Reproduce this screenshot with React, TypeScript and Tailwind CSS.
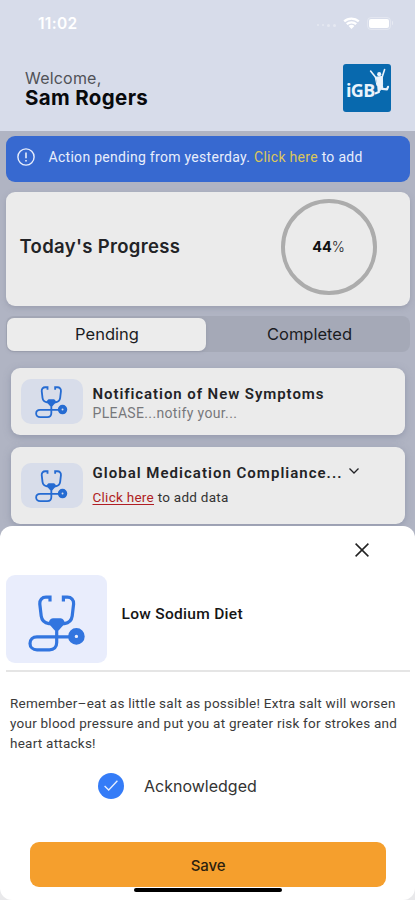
import React from "react";

function Stethoscope({ className }: { className: string }) {
  return (
    <svg viewBox="0 0 58 58" className={className} fill="none" stroke="currentColor" strokeWidth="3.2">
      <path d="M22 6.500V2.200H18C14 2.200 11.500 5 11.800 9L13.200 21C13.800 25.500 16.500 28 21 28.600H24" />
      <path d="M35.400 6.500V2.200H39.400C43.400 2.200 45.900 5 45.600 9L44.200 21C43.600 25.500 40.900 28 36.400 28.600H33.400" />
      <path d="M21 26.500C22 24 23.500 23.200 25 23.200H32.400C34 23.200 35.400 24 36.400 26.500V29L30.600 35.500H26.800L21 29Z" fill="currentColor" stroke="none" />
      <path d="M28.700 34V47.500C28.700 52 26 54.800 21.500 54.800H9C4.800 54.800 2 52 2 48.400C2 44.500 4.800 41.900 9 41.900H42" />
      <circle cx="48.400" cy="41.400" r="5" strokeWidth="6.600" />
    </svg>
  );
}

function StatusBar() {
  return (
    <div className="flex h-[46px] items-center justify-between pr-[22px] pl-[38px] text-white">
      <span className="pt-px text-[15.500px] font-semibold tracking-[0.300px]">11:02</span>
      <div className="flex items-center gap-[7px]">
        <div className="mt-1 flex items-center gap-[3px] opacity-35">
          <i className="size-[2px] rounded-full bg-white" />
          <i className="size-[2px] rounded-full bg-white" />
          <i className="size-[3px] rounded-full bg-white" />
          <i className="size-[3px] rounded-full bg-white" />
        </div>
        <svg viewBox="0 0 17 12" className="h-3 w-[17px]" fill="currentColor">
          <path d="M8.500 0.400C5.300 0.400 2.500 1.600.4 3.500L2 5.200A9.600 9.600 0 0 1 15 5.200L16.600 3.500A12 12 0 0 0 8.500.4Z" />
          <path d="M8.500 4.200A8 8 0 0 0 3 6.300L4.600 8A5.700 5.700 0 0 1 12.400 8L14 6.300A8 8 0 0 0 8.500 4.200Z" />
          <path d="M8.500 7.800A4.300 4.300 0 0 0 5.600 9L8.500 11.900L11.400 9A4.300 4.300 0 0 0 8.500 7.800Z" />
        </svg>
        <div className="flex items-center gap-px">
          <div className="rounded-[4px] border border-white/30 p-px">
            <div className="h-[9px] w-5 rounded-[2px] bg-white" />
          </div>
          <div className="h-1 w-px rounded-r bg-white/40" />
        </div>
      </div>
    </div>
  );
}

function Logo() {
  return (
    <div className="relative h-12 w-12 rounded-[3px] bg-[#0869ae]">
      <span className="absolute top-[13.500px] left-[3px] font-['Open_Sans',sans-serif] text-[18px] leading-6 font-bold tracking-[-0.700px] text-[#eaf3fc]">
        iGB
      </span>
      <svg viewBox="0 0 22 28" className="absolute top-[3px] left-[26px] h-7 w-[22px]" fill="#eaf3fc" stroke="#eaf3fc" strokeLinecap="round" strokeLinejoin="round">
        <circle cx="10.200" cy="7.200" r="2.100" stroke="none" />
        <path d="M1.600 4L6.800 10.500M15.600 2.500L13.200 10" strokeWidth="1.600" fill="none" />
        <path d="M6.600 10.200L13.400 9.400L13.600 17.500L8.300 18.500Z" strokeWidth="1" />
        <path d="M9.200 18L9.800 25L6.800 26.300M12.600 17.500L13.400 21.800L18 22.300L19 19.800" strokeWidth="2.200" fill="none" />
        <path d="M9 17.500L10.400 24L13 21.800V17.500Z" strokeWidth="1" />
      </svg>
    </div>
  );
}

export default function App() {
  return (
    <div className="flex h-[900px] w-[415px] flex-col overflow-hidden bg-[#b0b4c3] font-[Inter,sans-serif] text-[#222326]">
      <header className="h-[131px] shrink-0 bg-[#d7dcea]">
        <StatusBar />
        <div className="flex items-start justify-between pt-[18px] pr-6 pl-[25px]">
          <div className="pt-[4px]">
            <p className="text-[16px] leading-5 tracking-[0.200px] text-[#505257]">Welcome,</p>
            <h1 className="text-[20.500px] leading-5 font-bold tracking-[0.350px] text-[#08090c]">Sam Rogers</h1>
          </div>
          <Logo />
        </div>
      </header>

      <main className="flex h-[395px] shrink-0 flex-col px-[5.500px] pt-[5px]">
        <div className="flex h-[46px] shrink-0 items-center rounded-[9px] bg-[#3769d0] pb-1 pl-[11px] text-[#e8eefc]">
          <svg viewBox="0 0 18 18" className="size-[18px]" fill="none" stroke="currentColor" strokeWidth="1.400">
            <circle cx="9" cy="9" r="8.100" />
            <path d="M9 4.500V10.300M9 12V13.500" strokeWidth="1.600" />
          </svg>
          <p className="ml-[14px] font-[Roboto,sans-serif] text-[14px] tracking-[0.290px]">
            Action pending from yesterday. <span className="text-[#dcc75b]">Click here</span> to add
          </p>
        </div>

        <section className="mt-[10px] flex h-[114px] shrink-0 items-center justify-between rounded-[9px] bg-[#ebebeb] pr-[33px] pb-[5px] pl-[14px] shadow-[0_2px_5px_#858a9c80]">
          <h2 className="text-[18.500px] font-semibold tracking-[0.330px]">Today's Progress</h2>
          <div className="flex size-[96px] items-center justify-center rounded-full border-[4.500px] border-[#acacac] text-[14px]">
            <p className="leading-5">
              <b className="text-[14.500px] font-bold text-[#111]">44</b>
              <span className="font-light">%</span>
            </p>
          </div>
        </section>

        <div className="mt-[10px] flex h-[36px] shrink-0 rounded-[8px] bg-[#a5a9b7] p-[1.500px] text-[16.500px] text-[#1b1c1f]">
          <div className="flex w-[199px] items-center justify-center rounded-[7px] bg-[#ececec] pl-px shadow-[0_1px_3px_#858a9c80]">Pending</div>
          <div className="flex flex-1 items-center justify-center pl-[5px]">Completed</div>
        </div>

        <div className="mt-4 flex shrink-0 flex-col gap-3 px-[5px] font-[Roboto,sans-serif]">
          <article className="flex h-[67px] items-center rounded-[9px] bg-[#ebebeb] pl-[10px] shadow-[0_2px_7px_#747b9380]">
            <div className="flex h-[45px] w-[62px] items-center justify-center rounded-[10px] bg-[#d8ddea] pt-0.5 text-[#256bd2]">
              <Stethoscope className="size-[33px]" />
            </div>
            <div className="ml-[10px] pt-[3px]">
              <h3 className="text-[15px] leading-5 font-semibold tracking-[0.930px]">Notification of New Symptoms</h3>
              <p className="text-[14px] leading-[18px] tracking-[0.350px] text-[#77787b]">PLEASE...notify your...</p>
            </div>
          </article>
          <article className="flex h-[77px] items-center rounded-[9px] bg-[#ebebeb] pl-[10px] shadow-[0_2px_7px_#747b9380]">
            <div className="flex h-[45px] w-[62px] items-center justify-center rounded-[10px] bg-[#d8ddea] pt-0.5 text-[#256bd2]">
              <Stethoscope className="size-[33px]" />
            </div>
            <div className="ml-[10px] pb-[2px]">
              <div className="flex items-center">
                <h3 className="text-[15px] leading-6 font-semibold tracking-[1.020px]">Global Medication Compliance...</h3>
                <svg viewBox="0 0 10 6" className="mb-1 ml-[7px] h-1.5 w-[10px]" fill="none" stroke="currentColor" strokeWidth="1.300">
                  <path d="M.5 .5L5 5L9.500.5" />
                </svg>
              </div>
              <p className="text-[13.500px] leading-6 tracking-[0.270px] text-[#333]">
                <span className="text-[#b01e24] underline underline-offset-2">Click here</span> to add data
              </p>
            </div>
          </article>
        </div>
      </main>

      <div className="h-[374px] shrink-0 bg-linear-to-b from-[#b0b4c3] from-50% to-[#e9e9eb] to-50%">
        <section className="relative flex h-full flex-col rounded-[12px] bg-white">
          <svg viewBox="0 0 14 14" className="mt-[17px] ml-[355px] size-[14px] shrink-0" fill="none" stroke="#222" strokeWidth="1.500">
            <path d="M.6 .6L13.400 13.400M13.400 .6L.6 13.400" />
          </svg>
          <div className="mx-[5.500px] mt-[18px] flex h-[97px] items-start border-b-2 border-[#e5e5e5]">
            <div className="flex h-[88px] w-[101px] justify-center rounded-[9px] bg-[#e9edfc] pt-[20px] pl-px text-[#3275df]">
              <Stethoscope className="size-[58px]" />
            </div>
            <h2 className="mt-[27px] ml-[15px] font-[Roboto,sans-serif] text-[15.500px] leading-6 font-medium tracking-[0.300px] text-[#151515]">Low Sodium Diet</h2>
          </div>
          <p className="mt-[21px] ml-[10px] h-[60px] font-[Roboto,sans-serif] text-[13.500px] leading-5 tracking-[0.240px] whitespace-nowrap text-[#3b3b3b]">
            Remember–eat as little salt as possible! Extra salt will worsen
            <br />
            your blood pressure and put you at greater risk for strokes and
            <br />
            heart attacks!
          </p>
          <div className="mt-[19px] ml-[98px] flex h-[27px] items-center">
            <div className="flex size-[26px] items-center justify-center rounded-full bg-[#357cf7]">
              <svg viewBox="0 0 14 11" className="h-[11px] w-[14px]" fill="none" stroke="#e8f0ff" strokeWidth="1.300">
                <path d="M.6 6L4.700 10L13.400 .8" />
              </svg>
            </div>
            <span className="ml-5 text-[16px] text-[#333]">Acknowledged</span>
          </div>
          <button className="mt-[43px] ml-[30px] h-[45px] w-[356px] shrink-0 rounded-[9px] bg-[#f59f2d] pt-[3px] text-[15px] font-medium tracking-[-0.100px] text-[#2b210f]">Save</button>
          <div className="absolute top-[361.500px] left-[134px] h-[4.500px] w-[148px] rounded-full bg-black" />
        </section>
      </div>
    </div>
  );
}
